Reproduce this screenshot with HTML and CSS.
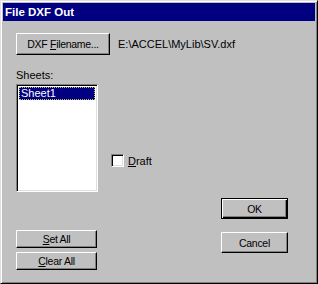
FILE: index.html
```html
<!DOCTYPE html>
<html lang="en">
<head>
  <meta charset="UTF-8" />
  <title>File DXF Out</title>
  <link rel="stylesheet" href="styles.css">
</head>
<body>

<div class="dialog">
  <div class="titlebar">File DXF Out</div>

  <div class="file-row">
    <button class="btn btn-file">DXF <u>F</u>ilename...</button>
    <span class="file-path">E:\ACCEL\MyLib\SV.dxf</span>
  </div>

  <div class="main">
    <div class="sheets">
      <div class="label">Sheets:</div>
      <ul class="listbox">
        <li class="selected">Sheet1</li>
      </ul>
      <button class="btn btn-small btn-set"><u>S</u>et All</button>
      <button class="btn btn-small btn-clear"><u>C</u>lear All</button>
    </div>

    <label class="check">
      <span class="check-box"></span>
      <span><u>D</u>raft</span>
    </label>

    <div class="actions">
      <button class="btn btn-default">OK</button>
      <button class="btn btn-cancel">Cancel</button>
    </div>
  </div>
</div>

</body>
</html>
```

FILE: styles.css
```css
body {
  margin: 0;
  background-color: #c0c0c0;
  font-family: "Liberation Sans", Arial, sans-serif;
  font-size: 11px;
  color: #000;
}
.dialog {
  width: 318px;
  height: 284px;
  box-sizing: border-box;
  padding: 2px;
  border: 1px solid;
  border-color: #dfdfdf #000 #000 #dfdfdf;
  box-shadow: inset 1px 1px #fff, inset -1px -1px #808080;
  background-color: #c0c0c0;
}
.titlebar {
  height: 18px;
  display: flex;
  align-items: center;
  padding-left: 2px;
  background-color: #000080;
  color: #fff;
  font-weight: bold;
  font-size: 11.5px;
}
u {
  text-decoration: underline;
  text-underline-offset: 1px;
}
/* buttons, win95 bevel */
.btn {
  display: block;
  box-sizing: border-box;
  padding: 0;
  margin: 0;
  font-family: inherit;
  font-size: 10.5px;
  letter-spacing: -0.3px;
  color: #000;
  background-color: #c0c0c0;
  border: 1px solid;
  border-color: #fff #000 #000 #fff;
  box-shadow: inset -1px -1px #808080;
  text-align: center;
}
.btn-default {
  border-color: #000;
  box-shadow: inset 1px 1px #fff, inset -1px -1px #000, inset -2px -2px #808080;
}
.file-row {
  display: flex;
  align-items: center;
  margin-top: 12px;
  padding-left: 13px;
}
.btn-file {
  width: 94px;
  height: 22px;
}
.file-path {
  margin-left: 8px;
}
.main {
  display: flex;
  padding: 0 27px 0 13px;
  margin-top: 14px;
}
.sheets {
  width: 82px;
}
.label {
  line-height: 13px;
}
.listbox {
  list-style: none;
  margin: 2px 0 0;
  padding: 0;
  height: 108px;
  box-sizing: border-box;
  background-color: #fff;
  border: 1px solid;
  border-color: #808080 #fff #fff #808080;
  box-shadow: inset 1px 1px #000, inset -1px -1px #dfdfdf;
  padding: 2px;
}
.listbox li {
  height: 13px;
  line-height: 12px;
  padding-left: 2px;
  box-sizing: border-box;
}
.listbox li.selected {
  background-color: #000080;
  color: #fff;
  outline: 1px dotted #c0c060;
  outline-offset: -1px;
}
.btn-small {
  width: 81px;
  height: 18px;
}
.btn-set {
  margin-top: 38px;
}
.btn-clear {
  margin-top: 4px;
}
.check {
  display: flex;
  align-items: center;
  gap: 4px;
  height: 13px;
  margin: 85px 0 0 13px;
}
.check-box {
  width: 13px;
  height: 13px;
  box-sizing: border-box;
  background-color: #fff;
  border: 1px solid;
  border-color: #808080 #fff #fff #808080;
  box-shadow: inset 1px 1px #000, inset -1px -1px #dfdfdf;
}
.actions {
  margin-left: auto;
  margin-top: 129px;
}
.actions .btn {
  width: 67px;
  height: 21px;
}
.btn-cancel {
  margin-top: 13px;
}
```
